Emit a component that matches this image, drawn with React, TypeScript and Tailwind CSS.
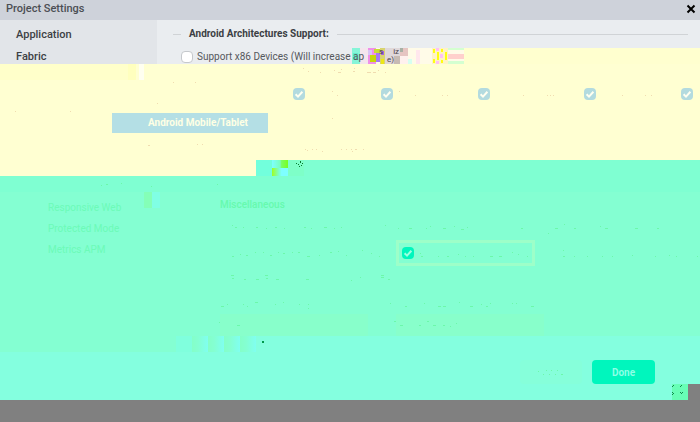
import React from "react";

type Dot = [x: number, y: number, w: number];

const platforms = ["Platform 1", "Platform 2", "Platform 3", "Platform 4", "Platform 5"];

const warmDots: Dot[] = [
  [303, 68, 1], [308, 71, 1], [320, 72, 1], [334, 70, 1], [338, 72, 3], [341, 69, 1],
  [353, 71, 2], [354, 68, 1], [367, 72, 4], [373, 72, 3], [378, 70, 1], [385, 72, 1],
  [15, 111, 1], [70, 111, 1], [157, 103, 1], [173, 82, 1], [195, 82, 1], [332, 91, 1],
  [337, 95, 1], [332, 118, 1], [399, 91, 1], [415, 95, 1], [442, 95, 1], [447, 95, 1],
  [523, 95, 1], [547, 95, 1], [550, 95, 1], [553, 95, 1], [622, 95, 1], [645, 95, 1],
  [651, 95, 1], [509, 57, 1], [528, 57, 1], [689, 59, 1], [692, 63, 1],
  [148, 145, 2], [197, 144, 1], [202, 144, 1], [305, 149, 1], [307, 150, 1], [312, 149, 1],
  [316, 149, 1], [322, 151, 1], [341, 149, 1], [346, 149, 1], [351, 149, 1], [355, 149, 2],
  [352, 151, 1], [363, 149, 1],
];

const greenDots: Dot[] = [
  [101, 185, 1], [106, 184, 2], [121, 183, 1], [151, 186, 1], [217, 184, 1],
  [232, 225, 1], [235, 227, 2], [243, 227, 1], [256, 227, 2], [266, 228, 1], [275, 227, 2],
  [284, 228, 1], [304, 227, 2], [311, 228, 1], [324, 227, 3], [334, 228, 1], [341, 227, 1],
  [232, 256, 2], [240, 254, 1], [246, 255, 2], [255, 252, 1], [263, 252, 1], [270, 255, 2],
  [278, 252, 1], [283, 253, 2], [292, 252, 1], [298, 252, 2], [307, 256, 3], [319, 255, 1],
  [330, 252, 2], [338, 251, 1], [346, 255, 1], [362, 250, 1], [371, 253, 1], [379, 256, 1],
  [385, 225, 1], [398, 228, 1], [409, 228, 3], [426, 228, 1], [430, 226, 1], [443, 228, 3],
  [454, 226, 1], [461, 229, 3], [467, 227, 1], [521, 228, 2], [548, 233, 1], [555, 228, 3],
  [564, 224, 1], [574, 228, 2], [600, 226, 1], [605, 228, 3], [635, 228, 3], [657, 228, 2],
  [420, 253, 1], [421, 256, 2], [438, 256, 1], [447, 256, 2], [458, 254, 1], [465, 256, 1],
  [473, 256, 1], [490, 256, 3], [499, 256, 3], [512, 252, 1], [518, 254, 1], [527, 256, 1],
  [563, 250, 1], [563, 256, 2], [574, 256, 1], [587, 256, 1], [602, 256, 1], [612, 256, 1],
  [632, 255, 1], [655, 256, 1], [669, 255, 1], [676, 256, 1], [697, 256, 1],
  [231, 275, 3], [232, 278, 2], [244, 279, 2], [256, 279, 3], [265, 275, 3], [266, 278, 2],
  [276, 279, 3], [306, 279, 3], [351, 280, 1], [360, 277, 1], [381, 275, 3], [381, 277, 3], [388, 279, 2],
  [221, 306, 3], [227, 304, 1], [243, 304, 1], [247, 306, 1], [255, 302, 3], [275, 304, 1],
  [283, 302, 1], [299, 304, 1], [308, 304, 1], [308, 308, 1], [390, 303, 1], [405, 306, 2],
  [424, 303, 1], [438, 306, 3], [443, 306, 3], [459, 302, 1], [470, 306, 3], [481, 304, 1],
  [486, 306, 2], [490, 303, 1], [512, 303, 1], [516, 303, 1], [531, 306, 3],
  [219, 322, 1], [237, 325, 3], [394, 321, 2], [400, 325, 3], [419, 325, 2], [427, 321, 2],
  [433, 325, 3], [443, 325, 2], [450, 326, 1], [456, 323, 1],
  [538, 371, 1], [546, 370, 1], [551, 370, 1], [557, 370, 1], [543, 374, 1], [549, 374, 1],
  [555, 374, 1], [561, 374, 2],
];

const darkDots: Dot[] = [
  [296, 163, 1], [300, 162, 1], [298, 164, 1], [301, 165, 1], [302, 163, 1], [299, 166, 1], [300, 161, 1],
];

function Dots({ dots, className }: { dots: Dot[]; className: string }) {
  return (
    <g className={className}>
      {dots.map(([x, y, w]) => (
        <rect key={`${x}-${y}`} x={x} y={y} width={w} height="1" />
      ))}
    </g>
  );
}

/** Stray colour blocks and specks scattered over the panels. */
function Artifacts() {
  return (
    <svg
      aria-hidden="true"
      className="pointer-events-none absolute top-0 left-0"
      width="700"
      height="422"
      shapeRendering="crispEdges"
    >
      <defs>
        <linearGradient id="wave" x1="0" x2="1">
          <stop offset="0" stopColor="#84ffc8" />
          <stop offset="0.4" stopColor="#84ffd2" />
          <stop offset="1" stopColor="#80fff0" />
        </linearGradient>
        <linearGradient id="lime" x1="0" x2="1">
          <stop offset="0" stopColor="#7effff" />
          <stop offset="0.5" stopColor="#7affc0" />
          <stop offset="0.6" stopColor="#78ff60" />
          <stop offset="1" stopColor="#78ff20" />
        </linearGradient>
        <linearGradient id="limeLow" x1="0" x2="1">
          <stop offset="0" stopColor="#a0ff20" />
          <stop offset="0.4" stopColor="#7effc0" />
          <stop offset="0.6" stopColor="#7effff" />
          <stop offset="1" stopColor="#7effff" />
        </linearGradient>
      </defs>
      <rect x="0" y="64" width="128" height="16" fill="#ffffca" />
      <rect x="128" y="64" width="8" height="16" fill="#ffffbe" />
      <rect x="139" y="64" width="5" height="16" fill="#fffff0" />
      <rect x="256" y="160" width="16" height="16" fill="#72ffdc" />
      <rect x="272" y="160" width="16" height="8" fill="url(#lime)" />
      <rect x="272" y="168" width="16" height="8" fill="url(#limeLow)" />
      <rect x="288" y="160" width="16" height="16" fill="#7effc8" />
      <rect x="144" y="192" width="8" height="16" fill="#84ffb8" />
      <rect x="152" y="192" width="8" height="16" fill="#80ffe4" />
      <rect x="176" y="336" width="16" height="16" fill="#80ffdd" />
      <rect x="192" y="336" width="16" height="16" fill="url(#wave)" />
      <rect x="208" y="336" width="16" height="16" fill="url(#wave)" />
      <rect x="224" y="336" width="16" height="16" fill="url(#wave)" />
      <rect x="240" y="336" width="16" height="16" fill="url(#wave)" />
      <rect x="262" y="341" width="2" height="2" fill="#00994a" />
      <Dots dots={warmDots} className="fill-[#f0dcb0]" />
      <Dots dots={greenDots} className="fill-[#6cf8aa]" />
      <Dots dots={darkDots} className="fill-[#087830]" />
    </svg>
  );
}

function BrokenStrip() {
  return (
    <div aria-hidden="true" className="pointer-events-none absolute top-12 right-0 left-[352px] h-4 bg-[#ffffcf]">
      <svg width="112" height="16" shapeRendering="crispEdges">
        <rect width="112" height="16" fill="#fffbe8" />
        <rect width="8" height="16" fill="#86f5d8" />
        <rect x="1" y="5" width="5" height="7" fill="#62edcb" />
        <rect x="8" width="8" height="16" fill="#f4e6ed" />
        <rect x="16" width="8" height="16" fill="#ef90e8" />
        <rect x="16" y="2" width="4" height="5" fill="#d9c4f4" />
        <rect x="18" y="7" width="7" height="7" fill="#c8d806" />
        <rect x="22" y="1" width="6" height="4" fill="#c7dd30" />
        <rect x="24" y="5" width="4" height="9" fill="#a67af1" />
        <rect x="28" width="5" height="16" fill="#d9d46f" />
        <rect x="29" y="3" width="3" height="4" fill="#a867dc" />
        <rect x="29" y="11" width="3" height="5" fill="#ede715" />
        <rect x="33" width="15" height="16" fill="#e0d8da" />
        <rect x="42" y="8" width="6" height="8" fill="#c7bbb4" />
        <rect x="48" width="8" height="8" fill="#e6c5c2" />
        <rect x="48" width="3" height="4" fill="#a8b0a4" />
        <rect x="48" y="8" width="8" height="8" fill="#fff1ee" />
        <rect x="56" y="11" width="4" height="5" fill="#d6fff0" />
        <rect x="64" y="2" width="4" height="14" fill="#ffe7ed" />
        <rect x="80" width="16" height="16" fill="#fff3c5" />
        <rect x="81" y="1" width="2" height="4" fill="#ffff10" />
        <rect x="81" y="11" width="2" height="4" fill="#ffff10" />
        <rect x="85" y="4" width="2" height="8" fill="#ffff10" />
        <rect x="89" y="1" width="2" height="3" fill="#ffff10" />
        <rect x="89" y="12" width="2" height="3" fill="#ffff10" />
        <rect x="93" y="4" width="2" height="8" fill="#ffff10" />
        <rect x="84" width="3" height="3" fill="#ffc0f4" />
        <rect x="88" y="6" width="3" height="4" fill="#ffc0f4" />
        <rect x="84" y="13" width="3" height="3" fill="#ffc0f4" />
        <rect x="96" width="16" height="2" fill="#d4ffd0" />
        <rect x="96" y="6" width="16" height="5" fill="#ffd0cc" />
        <rect x="96" y="13" width="16" height="3" fill="#d4ffd0" />
      </svg>
      <div className="absolute top-0 left-[27px] flex flex-col text-[8px] leading-[8px] text-[#4a4048]">
        <span className="flex gap-2.5"><span>s</span><span>iz</span></span>
        <span className="pl-2">e)</span>
      </div>
    </div>
  );
}

function Tick({ label, box, mark }: { label: string; box: string; mark: string }) {
  return (
    <span className="relative block size-3">
      <input type="checkbox" defaultChecked aria-label={label} className={`block size-3 appearance-none rounded ${box}`} />
      <svg aria-hidden="true" viewBox="0 0 12 12" className={`pointer-events-none absolute inset-0 size-3 fill-none stroke-2 ${mark}`}>
        <path d="M2.6 6.2 5 8.6 9.4 3.8" />
      </svg>
    </span>
  );
}

export default function App() {
  return (
    <main className="relative min-h-screen overflow-hidden bg-[#808080] font-['Roboto',sans-serif] text-[11px] leading-4 text-[#3c3f44]">
      <header className="flex h-5 items-center justify-between bg-[#ced2da] pr-1 pb-0.5 pl-1.5">
        <h1 className="font-medium text-[#4b4e54]">Project Settings</h1>
        <button aria-label="Close" className="text-black">
          <svg viewBox="0 0 10 10" className="size-2.5 fill-none stroke-current stroke-2">
            <path d="M1.5 1.5 8.5 8.5M8.5 1.5 1.5 8.5" />
          </svg>
        </button>
      </header>

      <div className="flex h-11 bg-[#eaedf0]">
        <nav className="flex w-[157px] flex-col gap-1.5 bg-[#e2e5e9] pt-[7px] pl-4 font-medium">
          <a href="#application">Application</a>
          <a href="#fabric">Fabric</a>
        </nav>
        <section className="flex-1 pt-1.5 pr-3 pl-4">
          <div className="flex items-center gap-2">
            <span className="h-px w-2 bg-[#d0d3d6]" />
            <h2 className="text-[10px] font-bold">Android Architectures Support:</h2>
            <span className="h-px flex-1 bg-[#d0d3d6]" />
          </div>
          <label className="relative z-10 mt-[7px] flex items-center gap-1 pl-2 text-[10px] whitespace-nowrap text-[#55585c]">
            <input type="checkbox" className="size-3 appearance-none rounded border border-[#c5c8cc] bg-white" />
            Support x86 Devices (Will increase ap
          </label>
        </section>
      </div>

      <section className="h-24 bg-[#ffffd2] pt-6">
        <div className="grid grid-cols-[88px_97px_106px_97px_12px] pl-[293px]">
          {platforms.map((name) => (
            <Tick key={name} label={name} box="bg-[#b3dbdf]" mark="stroke-[#fffff0]" />
          ))}
        </div>
        <button className="mt-[13px] ml-28 block h-5 w-[156px] bg-[#b4dfe5] pl-4 text-[10px] font-bold text-[#ffffe4]">
          Android Mobile/Tablet
        </button>
      </section>
      <div className="flex h-4">
        <div className="w-64 bg-[#ffffd2]" />
        <div className="flex-1 bg-[#7fffd2]" />
      </div>
      <div className="h-4 bg-[#7fffd2]" />

      <div className="flex h-36 bg-[#84ffd2]">
        <nav className="flex w-[220px] flex-col gap-[5px] pt-2 pl-12 text-[10px] text-[#6cfbb8]">
          <a href="#responsive">Responsive Web</a>
          <a href="#protected">Protected Mode</a>
          <a href="#metrics">Metrics APM</a>
        </nav>
        <section className="flex-1 pt-[5px]">
          <h2 className="text-[10px] font-medium text-[#66faae]">Miscellaneous</h2>
          <div className="mt-[27px] ml-44 flex h-[26px] w-[139px] items-center border-3 border-[#9dffc9] pl-[3px]">
            <Tick label="Enable option" box="bg-[#00f6bd]" mark="stroke-[#9dffe0]" />
          </div>
          <div className="mt-12 flex gap-7">
            <input aria-label="Name" className="h-[22px] w-[148px] bg-[#88ffcb]" />
            <input aria-label="Value" className="h-[22px] w-[148px] bg-[#88ffcb]" />
          </div>
        </section>
      </div>
      <div className="flex h-4">
        <div className="w-64 bg-[#84ffd2]" />
        <div className="flex-1 bg-[#84ffdf]" />
      </div>
      <footer className="flex h-8 items-end justify-end gap-2.5 bg-[#84ffdf] pr-[45px]">
        <button aria-label="Cancel" className="h-6 w-[62px] rounded bg-[#86ffda]" />
        <button className="h-6 w-[63px] rounded bg-[#00f6bd] pt-0.5 text-[10px] font-bold text-[#8cffe5]">Done</button>
      </footer>
      <div className="flex h-4">
        <div className="flex-1 bg-[#84ffdf]" />
        <svg aria-hidden="true" className="mr-3 size-4 bg-[#67ffb6] fill-[#10894a]" shapeRendering="crispEdges">
          <path d="M1 1h1v1h-1zM0 2h1v1h-1zM9 1h1v1h-1zM8 2h1v1h-1zM1 9h1v1h-1zM0 8h1v1h-1zM0 10h1v1h-1zM9 9h1v1h-1zM8 8h1v1h-1zM10 8h1v1h-1z" />
        </svg>
      </div>
      <Artifacts />
      <BrokenStrip />
    </main>
  );
}
